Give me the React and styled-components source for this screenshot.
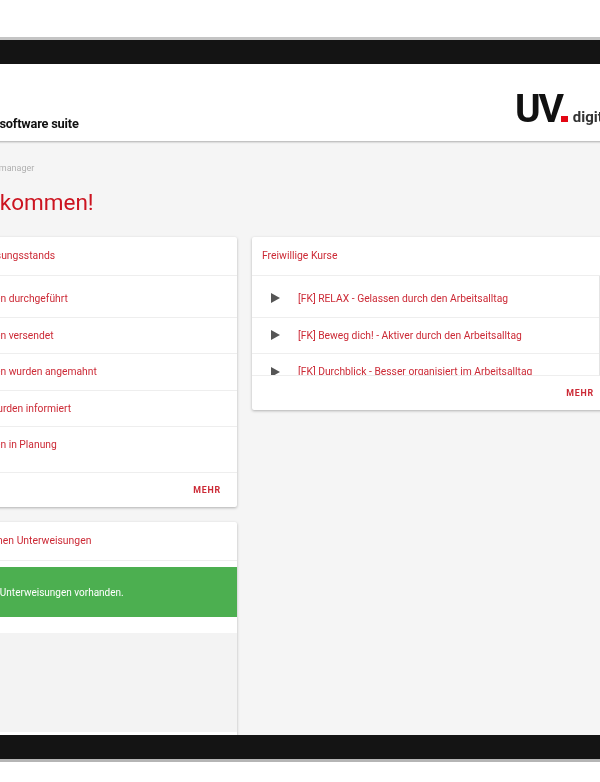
import React from 'react';
import styled, { createGlobalStyle } from 'styled-components';

const Global = createGlobalStyle`
	html, body { margin: 0; padding: 0; background: #fff; }
	* { box-sizing: border-box; }
	body { font-family: Roboto, "Liberation Sans", sans-serif; }
`;
const red = '#cc2a36';
const Page = styled.div`
	width: 600px;
	height: 782px;
	overflow: hidden;
	background: #fff;
	padding-top: 37px;
	filter: blur(0.6px);
`;
const Bar = styled.div`
	height: 27px;
	background: #141414;
	${(props) => (props.$bottom ? 'border-bottom: 3px solid #b5b5b5;' : 'border-top: 3px solid #c4c4c4;')}
`;
const Viewport = styled.div`
	height: 671px;
	overflow: hidden;
	background: #f5f5f5;
`;
const Canvas = styled.div`
	width: 760px;
	margin-left: -121px;
`;
const Header = styled.header`
	height: 77px;
	background: #fff;
	box-shadow: 0 1px 2px rgba(0, 0, 0, 0.3);
	display: flex;
	align-items: flex-end;
	justify-content: space-between;
	padding: 0 0 9px 0;
`;
const Suite = styled.div`
	font-size: 12.8px;
	font-weight: 700;
	letter-spacing: -0.2px;
	color: #111;
	padding-bottom: 1px;
	white-space: nowrap;
`;
const Logo = styled.div`
	display: flex;
	align-items: baseline;
	width: 124px;
	margin-bottom: 6px;
	white-space: nowrap;
`;
const LogoMark = styled.span`
	font-size: 39px;
	line-height: 28px;
	font-weight: 700;
	letter-spacing: -2.2px;
	color: #111;
`;
const LogoDot = styled.span`
	width: 7px;
	height: 6px;
	background: #e30613;
	margin: 0 5px 0 -1px;
`;
const LogoText = styled.span`
	font-size: 15px;
	font-weight: 700;
	color: #333;
`;
const Content = styled.main`
	padding: 22px 0 0 0;
`;
const Crumb = styled.div`
	font-size: 9px;
	line-height: 10px;
	color: #b0b0b0;
	white-space: nowrap;
`;
const Heading = styled.h1`
	margin: 16px 0 22px;
	font-size: 22.5px;
	line-height: 26px;
	font-weight: 400;
	color: #cc1420;
	white-space: nowrap;
`;
const Columns = styled.div`
	display: grid;
	grid-template-columns: 358px 358px;
	column-gap: 15px;
	align-items: start;
`;
const Column = styled.div`
	display: flex;
	flex-direction: column;
	gap: 15px;
`;
const Card = styled.section`
	background: #fff;
	border-radius: 2px;
	box-shadow: 0 1px 3px rgba(0, 0, 0, 0.28);
`;
const CardTitle = styled.div`
	height: 39px;
	padding: 0 10px 2px;
	display: flex;
	align-items: center;
	font-size: 10.4px;
	color: ${red};
	border-bottom: 1px solid #eee;
	white-space: nowrap;
`;
const List = styled.div`
	${(props) => props.$scroll && `
		height: 100px;
		overflow: hidden;
		margin-right: 10px;
		border-right: 1px solid #e4e4e4;
		border-bottom: 1px solid #eee;
	`}
`;
const Row = styled.div`
	display: flex;
	align-items: center;
	height: ${(props) => props.$height || 36.5}px;
	padding-left: ${(props) => props.$indent}px;
	padding-top: ${(props) => props.$top || 0}px;
	padding-bottom: ${(props) => props.$pad || 0}px;
	font-size: 10.3px;
	color: ${red};
	border-bottom: 1px solid #eee;
	white-space: nowrap;
`;
const Play = styled.span`
	width: 0;
	height: 0;
	margin: 0 18px 0 19px;
	border-left: 9px solid #555;
	border-top: 5px solid transparent;
	border-bottom: 5px solid transparent;
`;
const Footer = styled.div`
	height: 34px;
	display: flex;
	align-items: center;
	justify-content: flex-end;
	padding-right: 16px;
`;
const More = styled.button`
	border: 0;
	background: none;
	padding: 0;
	font: 700 8.8px Roboto, sans-serif;
	letter-spacing: 0.8px;
	color: ${red};
`;
const Alert = styled.div`
	margin-top: 6px;
	height: 50px;
	display: flex;
	align-items: center;
	padding-left: 57px;
	background: #4caf50;
	color: #fff;
	font-size: 10px;
	white-space: nowrap;
`;
const Spacer = styled.div`
	height: 16px;
`;
const Empty = styled.div`
	height: 99px;
	background: #f3f3f3;
`;
const Tail = styled.div`
	height: 40px;
`;

const status = [
	{ text: 'Unterweisungen durchgeführt', height: 41.5, top: 4 },
	{ text: 'Unterweisungen versendet' },
	{ text: 'Unterweisungen wurden angemahnt' },
	{ text: 'Vorgesetzte wurden informiert' },
	{ text: 'Unterweisungen in Planung', height: 46, pad: 10 },
];
const courses = [
	{ text: '[FK] RELAX - Gelassen durch den Arbeitsalltag', height: 41.5, top: 4 },
	{ text: '[FK] Beweg dich! - Aktiver durch den Arbeitsalltag' },
	{ text: '[FK] Durchblick - Besser organisiert im Arbeitsalltag' },
];

const App = () => {
	return (
		<Page>
			<Global />
			<Bar />
			<Viewport>
				<Canvas>
					<Header>
						<Suite>Die digitale Schulung software suite</Suite>
						<Logo>
							<LogoMark>UV</LogoMark>
							<LogoDot />
							<LogoText>digital</LogoText>
						</Logo>
					</Header>
					<Content>
						<Crumb>Mein Bereich / Unterweisungsmanager</Crumb>
						<Heading>Herzlich willkommen!</Heading>
						<Columns>
							<Column>
								<Card>
									<CardTitle>Übersicht des Unterweisungsstands</CardTitle>
									<List>
										{status.map((item) => (
											<Row key={item.text} $indent={53} $height={item.height} $top={item.top} $pad={item.pad}>
												{item.text}
											</Row>
										))}
									</List>
									<Footer>
										<More>MEHR</More>
									</Footer>
								</Card>
								<Card>
									<CardTitle>Meine aktuell noch offenen Unterweisungen</CardTitle>
									<Alert>Keine offenen Unterweisungen vorhanden.</Alert>
									<Spacer />
									<Empty />
									<Tail />
								</Card>
							</Column>
							<Column>
								<Card>
									<CardTitle>Freiwillige Kurse</CardTitle>
									<List $scroll>
										{courses.map((item) => (
											<Row key={item.text} $indent={0} $height={item.height} $top={item.top}>
												<Play />
												{item.text}
											</Row>
										))}
									</List>
									<Footer>
										<More>MEHR</More>
									</Footer>
								</Card>
							</Column>
						</Columns>
					</Content>
				</Canvas>
			</Viewport>
			<Bar $bottom />
		</Page>
	);
};

export default App;
